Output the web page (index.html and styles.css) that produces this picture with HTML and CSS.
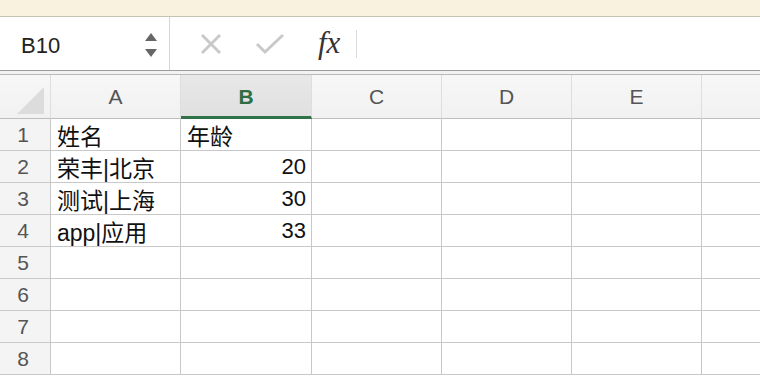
FILE: index.html
```html
<!DOCTYPE html>
<html lang="zh-CN">
<head>
    <meta charset="UTF-8">
    <title>Sheet</title>
    <link rel="stylesheet" href="styles.css">
</head>
<body>
    <div class="titlebar"></div>
    <div class="formula-bar">
        <div class="name-box">
            <span class="cell-ref">B10</span>
            <div class="spinner">
                <span class="arrow-up"></span>
                <span class="arrow-down"></span>
            </div>
        </div>
        <div class="formula-tools">
            <svg class="icon" width="24" height="24" viewBox="0 0 24 24">
                <path d="M3 3 L21 21 M21 3 L3 21" stroke="#c9c9c9" stroke-width="3" fill="none"/>
            </svg>
            <svg class="icon" width="30" height="24" viewBox="0 0 30 24">
                <path d="M2 12 L10 20 L28 3" stroke="#c9c9c9" stroke-width="3" fill="none"/>
            </svg>
            <span class="fx">fx</span>
            <span class="divider"></span>
        </div>
    </div>
    <div class="gap-strip"></div>
    <div class="sheet">
        <div class="hd corner"><span class="corner-tri"></span></div>
        <div class="hd col">A</div>
        <div class="hd col active">B</div>
        <div class="hd col">C</div>
        <div class="hd col">D</div>
        <div class="hd col">E</div>
        <div class="hd col last"></div>

        <div class="rn">1</div><div class="c">姓名</div><div class="c">年龄</div><div class="c"></div><div class="c"></div><div class="c"></div><div class="c last"></div>
        <div class="rn">2</div><div class="c">荣丰|北京</div><div class="c num">20</div><div class="c"></div><div class="c"></div><div class="c"></div><div class="c last"></div>
        <div class="rn">3</div><div class="c">测试|上海</div><div class="c num">30</div><div class="c"></div><div class="c"></div><div class="c"></div><div class="c last"></div>
        <div class="rn">4</div><div class="c">app|应用</div><div class="c num">33</div><div class="c"></div><div class="c"></div><div class="c"></div><div class="c last"></div>
        <div class="rn">5</div><div class="c"></div><div class="c"></div><div class="c"></div><div class="c"></div><div class="c"></div><div class="c last"></div>
        <div class="rn">6</div><div class="c"></div><div class="c"></div><div class="c"></div><div class="c"></div><div class="c"></div><div class="c last"></div>
        <div class="rn">7</div><div class="c"></div><div class="c"></div><div class="c"></div><div class="c"></div><div class="c"></div><div class="c last"></div>
        <div class="rn">8</div><div class="c"></div><div class="c"></div><div class="c"></div><div class="c"></div><div class="c"></div><div class="c last"></div>
    </div>
</body>
</html>
```

FILE: styles.css
```css
body {
    margin: 0;
    font-family: "Liberation Sans", "Noto Sans CJK SC", sans-serif;
    background: #fff;
    overflow: hidden;
}
.titlebar {
    height: 16px;
    background: #f8f2de;
    border-bottom: 1px solid #c6c4b0;
}
.formula-bar {
    display: flex;
    height: 53px;
    border-bottom: 1px solid #9c9c9c;
}
.name-box {
    width: 170px;
    display: flex;
    align-items: center;
    justify-content: space-between;
    padding: 0 12px 0 21px;
    box-sizing: border-box;
    border-right: 1px solid #d6d6d6;
}
.cell-ref {
    font-size: 22px;
    color: #222;
    margin-top: 4px;
}
.spinner {
    display: flex;
    flex-direction: column;
    gap: 8px;
    margin-top: 2px;
}
.arrow-up, .arrow-down {
    width: 0;
    height: 0;
    border-left: 6px solid transparent;
    border-right: 6px solid transparent;
}
.arrow-up {
    border-bottom: 8px solid #666;
}
.arrow-down {
    border-top: 8px solid #666;
}
.formula-tools {
    display: flex;
    align-items: center;
    padding-left: 29px;
}
.formula-tools .icon {
    margin-right: 32px;
}
.formula-tools .icon + .icon {
    margin-right: 33px;
}
.fx {
    font-family: "Liberation Serif", serif;
    font-style: italic;
    font-size: 31px;
    color: #333;
    margin-top: -2px;
}
.divider {
    width: 1px;
    height: 28px;
    background: #dcdcdc;
    margin-left: 16px;
}
.gap-strip {
    height: 3px;
    background: #f2f2f2;
    border-bottom: 1px solid #b9b9b9;
}
.sheet {
    display: grid;
    grid-template-columns: 51px 130px 131px 130px 130px 130px 1fr;
    grid-template-rows: 44px repeat(8, 32px);
}
.sheet > div {
    box-sizing: border-box;
    border-right: 1px solid #c8c8c8;
    border-bottom: 1px solid #c8c8c8;
}
.sheet > .last {
    border-right: none;
}
.hd {
    background: linear-gradient(#f7f7f7, #f1f1f1);
    display: flex;
    align-items: center;
    justify-content: center;
    font-size: 21px;
    color: #555;
    border-right-color: #dedede !important;
    border-bottom-color: #bdbdbd !important;
}
.hd.active {
    background: linear-gradient(#e8e8e8, #e0e0e0);
    color: #2e6e44;
    font-weight: bold;
    border-bottom: 3px solid #2f7248 !important;
    padding-top: 2px;
}
.corner {
    position: relative;
}
.corner-tri {
    position: absolute;
    left: 17px;
    bottom: 4px;
    width: 0;
    height: 0;
    border-left: 27px solid transparent;
    border-bottom: 27px solid #dcdcdc;
}
.rn {
    background: #f4f4f4;
    display: flex;
    align-items: center;
    justify-content: center;
    font-size: 21px;
    color: #555;
    padding-right: 4px;
}
.c {
    display: flex;
    align-items: center;
    padding: 0 5px 0 6px;
    font-size: 23px;
    color: #111;
}
.c.num {
    justify-content: flex-end;
    font-size: 22px;
}
```
